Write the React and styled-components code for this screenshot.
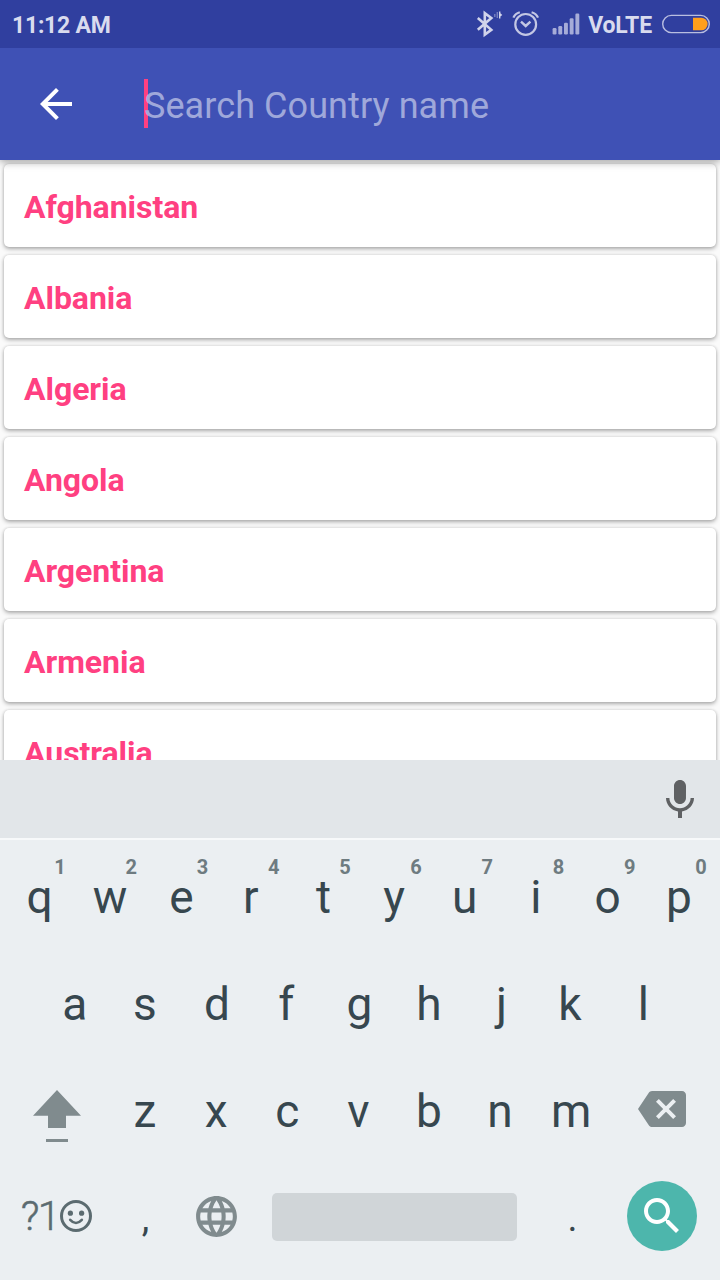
import React from "react";
import styled, { createGlobalStyle } from "styled-components";

const GlobalStyle = createGlobalStyle`
  * { box-sizing: border-box; }
  body { margin: 0; font-family: Roboto, "Liberation Sans", sans-serif; }
`;

const Screen = styled.div`
  display: flex;
  flex-direction: column;
  width: 720px;
  height: 1280px;
  overflow: hidden;
  background: #fafafa;
`;

const StatusBar = styled.header`
  position: relative;
  z-index: 2;
  display: flex;
  align-items: center;
  justify-content: space-between;
  flex: none;
  height: 48px;
  padding: 0 10px 0 12px;
  background: #303f9f;
  color: #d9dbee;
`;

const StatusText = styled.span`
  font-size: 23px;
  font-weight: 700;
  line-height: 27px;
  padding-top: 2px;
  letter-spacing: ${(p) => p.$tracking || 0}px;
`;

const StatusIcons = styled.div`
  display: flex;
  align-items: center;
  height: 48px;
`;

const StatusSvg = styled.svg`
  display: block;
  flex: none;
  margin-right: ${(p) => p.$gap || 0}px;
`;

const AppBar = styled.div`
  position: relative;
  z-index: 1;
  display: flex;
  align-items: center;
  flex: none;
  height: 112px;
  padding-left: 32px;
  background: #3f51b5;
  box-shadow: 0 2px 8px rgba(0, 0, 0, 0.36);
`;

const SearchField = styled.div`
  display: flex;
  align-items: center;
  height: 49px;
  margin: 0 0 1px 64px;
`;

const Caret = styled.span`
  width: 4px;
  height: 49px;
  margin-right: -4px;
  background: #ff4081;
`;

const Placeholder = styled.span`
  position: relative;
  padding-top: 5px;
  font-size: 36px;
  line-height: 42px;
  letter-spacing: 0.08px;
  color: #9fa8da;
`;

const CountryList = styled.main`
  display: flex;
  flex-direction: column;
  flex: none;
  gap: 8px;
  height: 600px;
  padding: 4px 4px 0;
  overflow: hidden;
`;

const CountryCard = styled.div`
  display: flex;
  align-items: center;
  flex: none;
  height: 83px;
  padding: 3px 20px 0;
  border-radius: 5px;
  background: #fff;
  box-shadow: 0 2px 4px rgba(0, 0, 0, 0.3), 0 0 3px rgba(0, 0, 0, 0.14);
  color: #ff4081;
  font-size: 32px;
  font-weight: 700;
  line-height: 38px;
  letter-spacing: -0.04px;
`;

const Keyboard = styled.section`
  display: flex;
  flex-direction: column;
  flex: 1;
  background: #ebeff2;
`;

const SuggestionStrip = styled.div`
  display: flex;
  align-items: center;
  justify-content: flex-end;
  height: 80px;
  padding: 2px 16px 0 0;
  border-bottom: 2px solid #f7f9fa;
  background: #e2e6e9;
  margin-bottom: 4px;
`;

const KeyRow = styled.div`
  display: flex;
  height: ${(p) => p.$height || 107}px;
  padding: 0 ${(p) => p.$inset || 4}px;
`;

const Key = styled.div`
  position: relative;
  display: flex;
  align-items: center;
  justify-content: center;
  flex: ${(p) => p.$span || 1} 1 0;
  min-width: 0;
  padding-top: ${(p) => p.$drop || 0}px;
  padding-bottom: ${(p) => p.$lift || 0}px;
  color: #37474f;
  font-size: 46px;
  line-height: 54px;
`;

const KeyLabel = styled.span`
  margin: 0 0 2px ${(p) => -3 + 2 * p.$bearing}px;
`;

const PunctuationLabel = styled.span`
  margin-left: -2px;
  padding-top: 4px;
  font-size: 38px;
  line-height: 46px;
`;

const KeyHint = styled.span`
  position: absolute;
  top: 11px;
  right: 9.4px;
  color: #6e7b80;
  font-size: 20px;
  font-weight: 700;
  line-height: 24px;
`;

const SymbolLabel = styled.span`
  color: #5b6b70;
  font-size: 41px;
  font-weight: 300;
  line-height: 48px;
  letter-spacing: -1.6px;
  -webkit-text-stroke: 0.5px #5b6b70;
`;

const SpaceBar = styled.div`
  width: 245px;
  height: 48px;
  margin: 2px 2px 0 0;
  border-radius: 5px;
  background: #d0d5d8;
`;

const SearchButton = styled.div`
  display: grid;
  place-items: center;
  width: 70px;
  height: 70px;
  margin-right: 1px;
  border-radius: 50%;
  background: #4db6ac;
`;

const Icon = styled.svg`
  display: block;
  flex: none;
  margin-right: ${(p) => p.$gap || 0}px;
`;

const MaterialIcon = ({ path, size = 48, color, gap }) => (
  <Icon width={size} height={size} viewBox="0 0 24 24" fill={color} $gap={gap}>
    <path d={path} />
  </Icon>
);

const PATHS = {
  back: "M20 11H7.83l5.59-5.59L12 4l-8 8 8 8 1.41-1.41L7.83 13H20v-2z",
  mic: "M12 14c1.66 0 2.99-1.34 2.99-3L15 5c0-1.66-1.34-3-3-3S9 3.34 9 5v6c0 1.66 1.34 3 3 3zm5.3-3c0 3-2.54 5.1-5.3 5.1S6.7 14 6.7 11H5c0 3.41 2.72 6.23 6 6.72V21h2v-3.28c3.28-.48 6-3.3 6-6.72h-1.7z",
  backspace:
    "M22 3H7c-.69 0-1.23.35-1.59.88L0 12l5.41 8.11c.36.53.9.89 1.59.89h15c1.1 0 2-.9 2-2V5c0-1.1-.9-2-2-2zm-3 12.59L17.59 17 14 13.41 10.41 17 9 15.59 12.59 12 9 8.41 10.41 7 14 10.59 17.59 7 19 8.41 15.41 12 19 15.59z",
  globe:
    "M11.99 2C6.47 2 2 6.48 2 12s4.47 10 9.99 10C17.52 22 22 17.52 22 12S17.52 2 11.99 2zm6.93 6h-2.95c-.32-1.25-.78-2.45-1.38-3.56 1.84.63 3.37 1.91 4.33 3.56zM12 4.04c.83 1.2 1.48 2.53 1.91 3.96h-3.82c.43-1.43 1.08-2.76 1.91-3.96zM4.26 14C4.1 13.36 4 12.69 4 12s.1-1.36.26-2h3.38c-.08.66-.14 1.32-.14 2 0 .68.06 1.34.14 2H4.26zm.82 2h2.95c.32 1.25.78 2.45 1.38 3.56-1.84-.63-3.37-1.9-4.33-3.56zm2.95-8H5.08c.96-1.66 2.49-2.93 4.33-3.56C8.81 5.55 8.35 6.75 8.03 8zM12 19.96c-.83-1.2-1.48-2.53-1.91-3.96h3.82c-.43 1.43-1.08 2.76-1.91 3.96zM14.34 14H9.66c-.09-.66-.16-1.32-.16-2 0-.68.07-1.35.16-2h4.68c.09.65.16 1.32.16 2 0 .68-.07 1.34-.16 2zm.25 5.56c.6-1.11 1.06-2.31 1.38-3.56h2.95c-.96 1.65-2.49 2.93-4.33 3.56zM16.36 14c.08-.66.14-1.32.14-2 0-.68-.06-1.34-.14-2h3.38c.16.64.26 1.31.26 2s-.1 1.36-.26 2h-3.38z",
  search:
    "M15.5 14h-.79l-.28-.27C15.41 12.59 16 11.11 16 9.5 16 5.91 13.09 3 9.5 3S3 5.91 3 9.5 5.91 16 9.5 16c1.61 0 3.09-.59 4.23-1.57l.27.28v.79l5 4.99L20.49 19l-4.99-5zm-6 0C7.01 14 5 11.99 5 9.5S7.01 5 9.5 5 14 7.01 14 9.5 11.99 14 9.5 14z",
};

const BluetoothIcon = () => (
  <StatusSvg width="28" height="48" viewBox="476 0 28 48" $gap={8} fill="none">
    <path d="M477.8 18L491.3 29.8L484.8 34.6V13.2L491.3 18L477.8 29.8" stroke="#d0d3ea" strokeWidth="2.6" />
    <path d="M494.8 14V17M497.3 12V18" stroke="#7982c0" strokeWidth="1.4" />
    <path d="M499 11.5H500.4V13.2L502.3 15L500.4 16.6V18.5H499Z" fill="#d0d3ea" />
  </StatusSvg>
);

const AlarmIcon = () => (
  <StatusSvg width="28" height="48" viewBox="512 0 28 48" $gap={12} fill="none" stroke="#c3c7e4" strokeWidth="2.2">
    <circle cx="525.7" cy="24.4" r="10.4" />
    <path d="M513.4 17.6Q515 13.6 519.8 12.2M531.6 12.2Q536.4 13.6 538 17.6" />
    <path d="M521 21.6L525.7 26L530.4 21.6" strokeWidth="2.4" />
  </StatusSvg>
);

const BAR_TOPS = [28, 26, 22.7, 18.3, 13.5];

const SignalIcon = () => (
  <StatusSvg width="28" height="48" viewBox="552 0 28 48" $gap={8} fill="#a6acd8">
    {BAR_TOPS.map((top, i) => (
      <rect key={top} x={552.6 + i * 5.7} y={top} width="3.9" height={34.5 - top} rx="1.2" />
    ))}
  </StatusSvg>
);

const BatteryIcon = () => (
  <StatusSvg width="48" height="48" viewBox="662 0 48 48">
    <rect x="662.7" y="15.4" width="46.6" height="17.2" rx="8.6" fill="none" stroke="#b9bee0" strokeWidth="1.4" />
    <path d="M693 17.7H701.3A6.3 6.3 0 0 1 701.3 30.3H693Z" fill="#ff9f1c" />
  </StatusSvg>
);

const ShiftIcon = () => (
  <Icon width="48" height="54" viewBox="33 1089 48 54" fill="#808b8e" $gap={1}>
    <path d="M57 1090L81 1115.7H66V1128H48V1115.7H33Z" />
    <rect x="46" y="1139" width="22" height="3" />
  </Icon>
);

const SmileyIcon = () => (
  <Icon width="34" height="34" viewBox="0 0 34 34" fill="#5b6b70" $gap={1}>
    <circle cx="17" cy="17" r="14.5" fill="none" stroke="#5b6b70" strokeWidth="3" />
    <circle cx="11.4" cy="14.2" r="2.6" />
    <circle cx="22.6" cy="14.2" r="2.6" />
    <path d="M11.2 20.8Q17 27.2 22.8 20.8" fill="none" stroke="#5b6b70" strokeWidth="2.6" strokeLinecap="round" />
  </Icon>
);

const COUNTRIES = ["Afghanistan", "Albania", "Algeria", "Angola", "Argentina", "Armenia", "Australia"];

const BEARINGS = {
  q: 1.5, w: 0.7, e: 1, a: 1, d: 0.8, g: 0.8, j: 0.6, t: 0.5,
  r: -1, f: -1, k: -2.2, i: -0.6, u: -0.6, h: -0.8, b: -0.8, n: -1, m: -1,
};

const Letters = ({ text, hints = "" }) =>
  [...text].map((letter, i) => (
    <Key key={letter}>
      <KeyLabel $bearing={BEARINGS[letter] || 0}>{letter}</KeyLabel>
      {hints[i] && <KeyHint>{hints[i]}</KeyHint>}
    </Key>
  ));

const Punctuation = ({ mark }) => (
  <Key>
    <PunctuationLabel>{mark}</PunctuationLabel>
  </Key>
);

export default function App() {
  return (
    <Screen>
      <GlobalStyle />
      <StatusBar>
        <StatusText $tracking={-0.25}>11:12 AM</StatusText>
        <StatusIcons>
          <BluetoothIcon />
          <AlarmIcon />
          <SignalIcon />
          <StatusText $tracking={-0.15}>VoLTE</StatusText>
          <StatusSvg width="10" height="48" />
          <BatteryIcon />
        </StatusIcons>
      </StatusBar>
      <AppBar>
        <MaterialIcon path={PATHS.back} color="#fff" />
        <SearchField>
          <Caret />
          <Placeholder>Search Country name</Placeholder>
        </SearchField>
      </AppBar>
      <CountryList>
        {COUNTRIES.map((name) => (
          <CountryCard key={name}>{name}</CountryCard>
        ))}
      </CountryList>
      <Keyboard>
        <SuggestionStrip>
          <MaterialIcon path={PATHS.mic} color="#5f6163" />
        </SuggestionStrip>
        <KeyRow>
          <Letters text="qwertyuiop" hints="1234567890" />
        </KeyRow>
        <KeyRow $inset={39.6}>
          <Letters text="asdfghjkl" />
        </KeyRow>
        <KeyRow>
          <Key $span={1.5} $drop={8}>
            <ShiftIcon />
          </Key>
          <Letters text="zxcvbnm" />
          <Key $span={1.5} $lift={5}>
            <MaterialIcon path={PATHS.backspace} color="#808b8e" gap={1} />
          </Key>
        </KeyRow>
        <KeyRow $height={102}>
          <Key $span={1.5}>
            <SymbolLabel>?1</SymbolLabel>
            <SmileyIcon />
          </Key>
          <Punctuation mark="," />
          <Key>
            <MaterialIcon path={PATHS.globe} size={49} color="#808b8e" gap={2} />
          </Key>
          <Key $span={4}>
            <SpaceBar />
          </Key>
          <Punctuation mark="." />
          <Key $span={1.5}>
            <SearchButton>
              <MaterialIcon path={PATHS.search} color="#fff" />
            </SearchButton>
          </Key>
        </KeyRow>
      </Keyboard>
    </Screen>
  );
}
